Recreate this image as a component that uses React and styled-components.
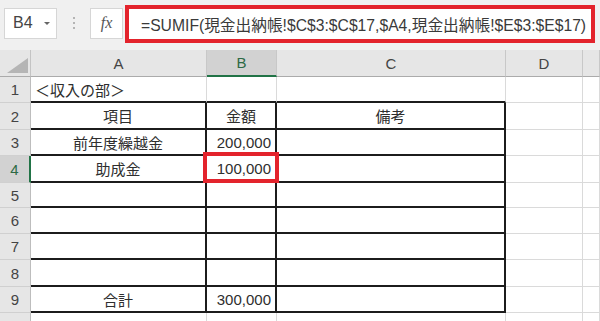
import React from "react";
import styled, { createGlobalStyle } from "styled-components";

const GlobalStyle = createGlobalStyle`
  html, body {
    margin: 0;
    padding: 0;
    background: #ffffff;
    overflow: hidden;
  }
  body {
    font-family: "Liberation Sans", "Noto Sans CJK JP", sans-serif;
  }
`;

const COLS = [31, 176, 70, 229, 77];
const LETTERS = ["A", "B", "C", "D", ""];

// n: row number, h: row height, a/b/c: cell values
const ROWS = [
  { n: 1, h: 26, a: "＜収入の部＞", aAlign: "left" },
  { n: 2, h: 27, a: "項目", b: "金額", c: "備考" },
  { n: 3, h: 26, a: "前年度繰越金", b: "200,000" },
  { n: 4, h: 27, a: "助成金", b: "100,000" },
  { n: 5, h: 25 },
  { n: 6, h: 26 },
  { n: 7, h: 26 },
  { n: 8, h: 27 },
  { n: 9, h: 26, a: "合計", b: "300,000" },
  { n: 10, h: 26 },
];

const SELECTED_ROW = 4;
const SELECTED_COL = "B";

const Page = styled.div`
  width: 600px;
  height: 321px;
  overflow: hidden;
  background: #ffffff;
`;

const FormulaBar = styled.div`
  height: 50px;
  box-sizing: border-box;
  background: #f0f0f0;
  display: flex;
  align-items: center;
  padding: 0 5px 4px 4px;
`;

const NameBox = styled.div`
  box-sizing: border-box;
  width: 53px;
  height: 31px;
  background: #fff;
  border: 1px solid #d6d6d6;
  display: flex;
  align-items: center;
  justify-content: space-between;
  padding: 0 6px 0 8px;
  font-size: 16px;
  color: #444;
`;

const DropArrow = styled.span`
  width: 0;
  height: 0;
  border-left: 3px solid transparent;
  border-right: 3px solid transparent;
  border-top: 3px solid #666;
  margin-top: 1px;
`;

const Dots = styled.div`
  width: 33px;
  display: flex;
  flex-direction: column;
  align-items: center;
  gap: 3px;

  span {
    width: 2px;
    height: 2px;
    background: #b4b4b4;
  }
`;

const FxBox = styled.div`
  box-sizing: border-box;
  width: 33px;
  height: 31px;
  background: #fff;
  border: 1px solid #d6d6d6;
  display: flex;
  align-items: center;
  justify-content: center;
  font-family: "Liberation Serif", "DejaVu Serif", serif;
  font-style: italic;
  font-size: 16px;
  color: #555;
  margin-right: 2px;
`;

const FormulaInput = styled.div`
  flex: 1;
  box-sizing: border-box;
  height: 38px;
  margin-top: 2px;
  background: #fff;
  border: 4px solid #e3232c;
  display: flex;
  align-items: center;
  padding-left: 12px;
  font-size: 15.7px;
  color: #3a3a3a;
  white-space: nowrap;
  overflow: hidden;
`;

const Sheet = styled.div`
  display: grid;
  grid-template-columns: ${COLS.map((w) => w + "px").join(" ")} 1fr;
  grid-template-rows: ${({ $rows }) => $rows};
`;

const Corner = styled.div`
  box-sizing: border-box;
  background: #e6e6e6;
  border-right: 1px solid #c4c4c4;
  border-bottom: 1px solid #ababab;
  display: flex;
  align-items: flex-end;
  justify-content: flex-end;
  padding: 0 2px 3px 0;
`;

const ColHead = styled.div`
  box-sizing: border-box;
  background: ${({ $active }) => ($active ? "#d2d2d2" : "#e6e6e6")};
  color: ${({ $active }) => ($active ? "#2d6a45" : "#444")};
  border-right: 1px solid #c8c8c8;
  border-bottom: ${({ $active }) =>
    $active ? "2px solid #217346" : "1px solid #ababab"};
  display: flex;
  align-items: center;
  justify-content: center;
  font-size: 15px;
`;

const RowHead = styled.div`
  box-sizing: border-box;
  background: ${({ $active }) => ($active ? "#d2d2d2" : "#e6e6e6")};
  color: ${({ $active }) => ($active ? "#2d6a45" : "#444")};
  border-right: ${({ $active }) =>
    $active ? "2px solid #217346" : "1px solid #bdbdbd"};
  border-bottom: 1px solid #d0d0d0;
  display: flex;
  align-items: center;
  justify-content: center;
  font-size: 15px;
`;

const Cell = styled.div`
  position: relative;
  box-sizing: border-box;
  display: flex;
  align-items: center;
  justify-content: ${({ $align }) =>
    $align === "right"
      ? "flex-end"
      : $align === "center"
      ? "center"
      : "flex-start"};
  padding: 0 4px;
  border-right: ${({ $edgeRight }) =>
    $edgeRight ? "2px solid #1c1c1c" : "1px solid #dadada"};
  border-bottom: ${({ $edgeBottom }) =>
    $edgeBottom ? "2px solid #1c1c1c" : "1px solid #dadada"};
  font-size: 15px;
  color: #2e2e2e;
  white-space: nowrap;
`;

const Highlight = styled.div`
  position: absolute;
  top: -4px;
  left: -4px;
  right: -4px;
  bottom: -2px;
  border: 4px solid #e3232c;
  pointer-events: none;
  z-index: 2;
`;

const isNumber = (v) => /^[\d,]+$/.test(v || "");

const App = () => {
  const rowsTemplate = ["27px", ...ROWS.map((r) => r.h + "px")].join(" ");

  return (
    <Page>
      <GlobalStyle />
      <FormulaBar>
        <NameBox>
          B4
          <DropArrow />
        </NameBox>
        <Dots>
          <span />
          <span />
          <span />
        </Dots>
        <FxBox>fx</FxBox>
        <FormulaInput>
          =SUMIF(現金出納帳!$C$3:$C$17,$A4,現金出納帳!$E$3:$E$17)
        </FormulaInput>
      </FormulaBar>

      <Sheet $rows={rowsTemplate}>
        <Corner>
          <svg width="21" height="15" viewBox="0 0 21 15">
            <polygon points="21,0 21,15 0,15" fill="#b5b5b5" />
          </svg>
        </Corner>
        {LETTERS.map((l, i) => (
          <ColHead key={"h" + i} $active={l === SELECTED_COL}>
            {l}
          </ColHead>
        ))}

        {ROWS.map((r) => {
          const inTable = r.n >= 2 && r.n <= 9;
          const aboveTable = r.n === 1;
          return (
            <React.Fragment key={r.n}>
              <RowHead $active={r.n === SELECTED_ROW}>
                {r.n < 10 ? r.n : ""}
              </RowHead>
              {["a", "b", "c"].map((k) => {
                const v = r[k];
                const align =
                  k === "a" && r.aAlign
                    ? r.aAlign
                    : isNumber(v)
                    ? "right"
                    : "center";
                return (
                  <Cell
                    key={k}
                    $align={align}
                    $edgeRight={inTable}
                    $edgeBottom={inTable || aboveTable}
                  >
                    {v}
                    {r.n === SELECTED_ROW && k === "b" && <Highlight />}
                  </Cell>
                );
              })}
              <Cell />
              <Cell />
            </React.Fragment>
          );
        })}
      </Sheet>
    </Page>
  );
};

export default App;
